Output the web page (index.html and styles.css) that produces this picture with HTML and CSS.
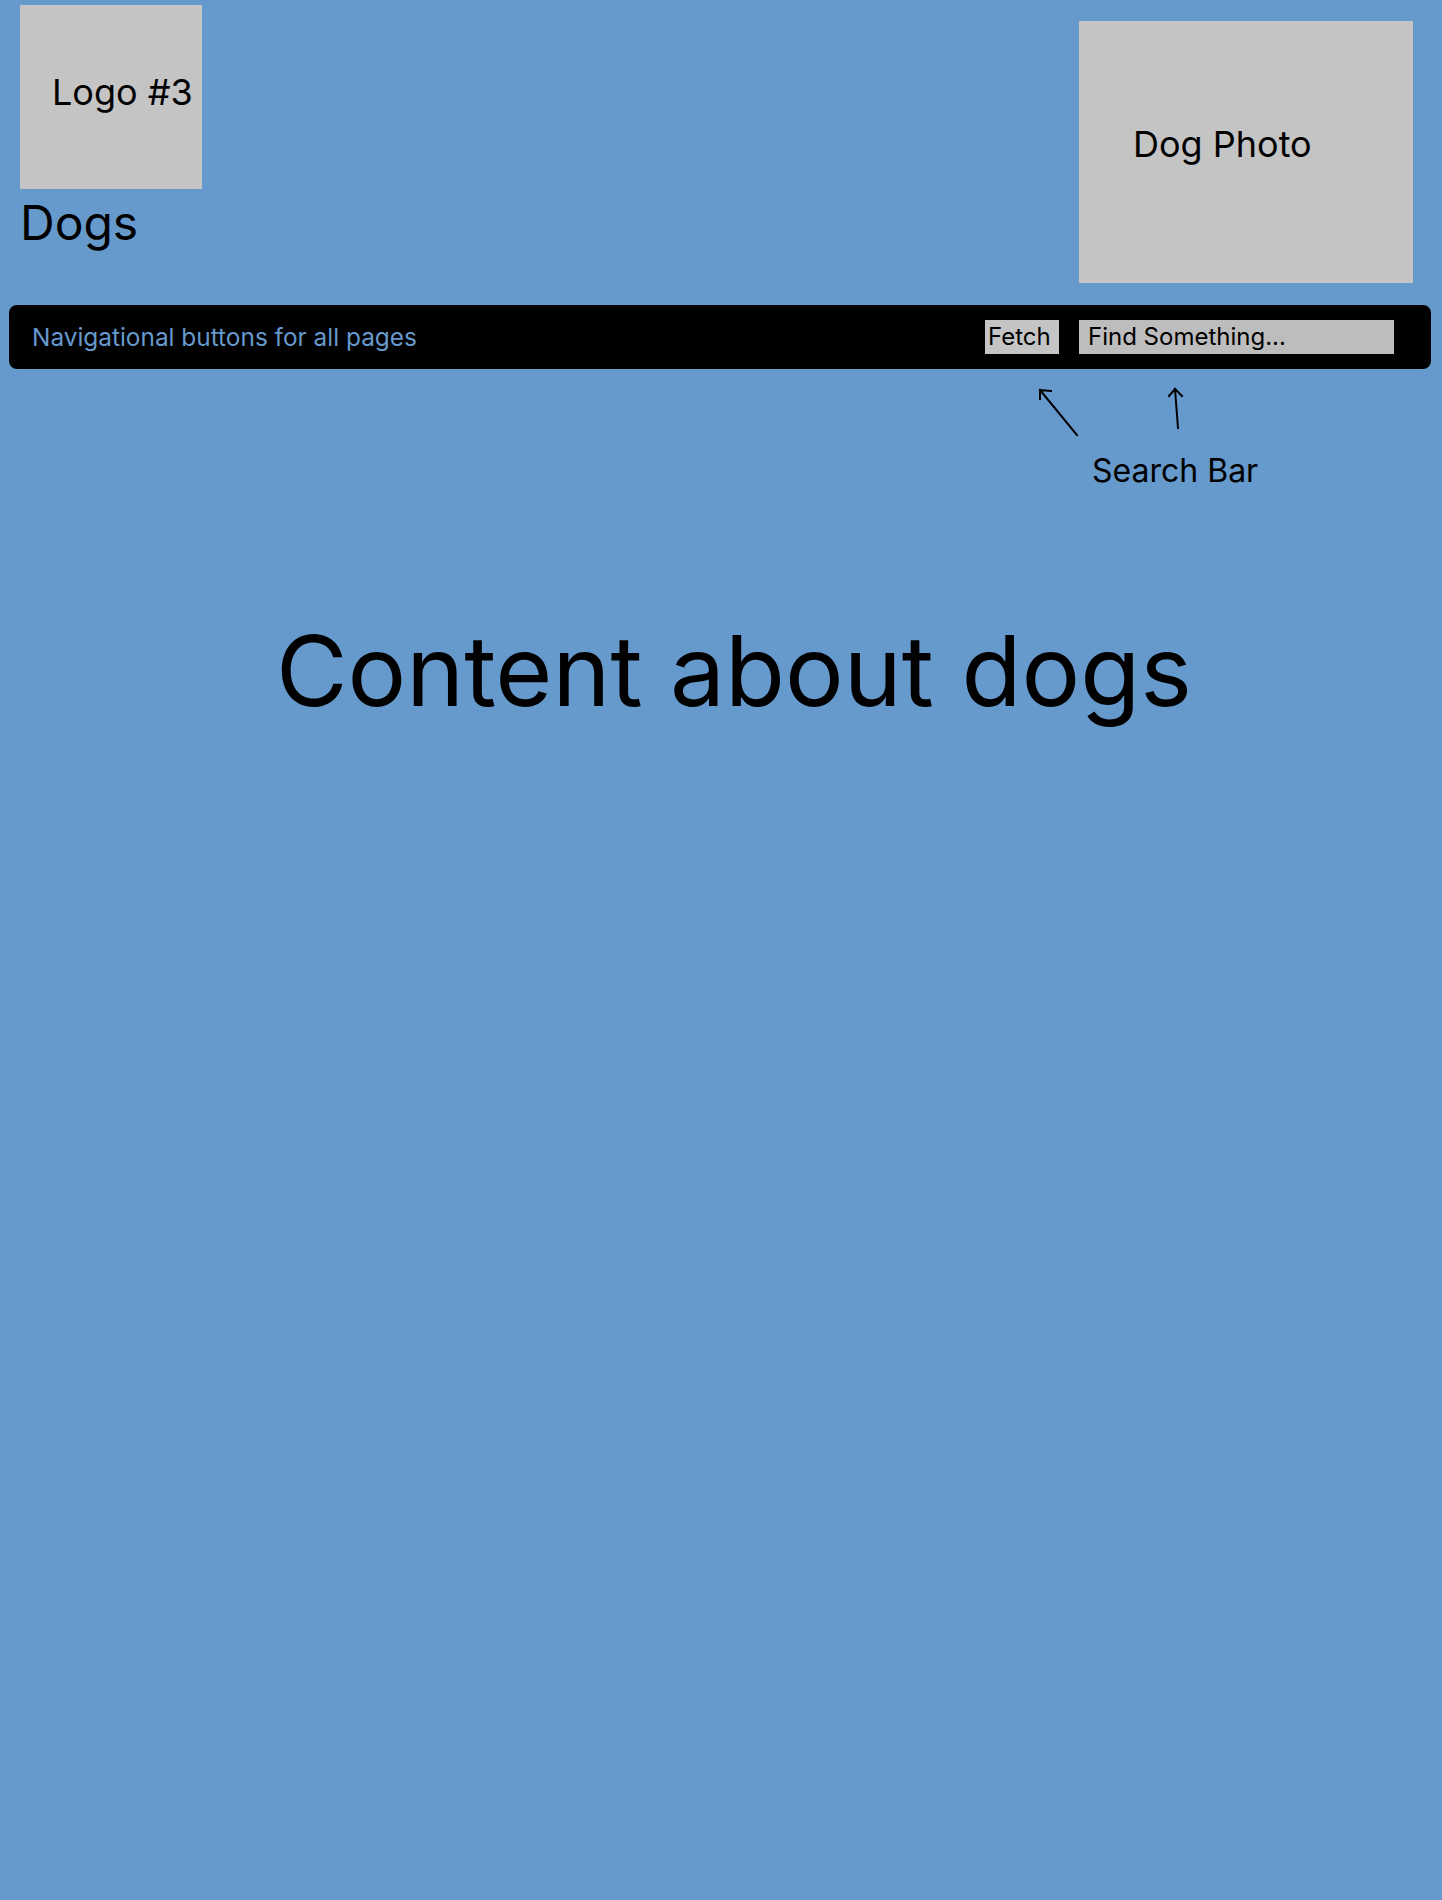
FILE: index.html
```html
<!DOCTYPE html>
<html lang="en">
<head>
<meta charset="utf-8">
<title>Dogs</title>
<link rel="stylesheet" href="styles.css">
</head>
<body>
<header class="header">
  <div class="brand">
    <div class="logo"><span>Logo #3</span></div>
    <h1 class="title">Dogs</h1>
  </div>
  <div class="photo"><span>Dog Photo</span></div>
</header>
<nav class="navbar">
  <span class="nav-text">Navigational buttons for all pages</span>
  <div class="search">
    <button class="fetch">Fetch</button>
    <div class="search-input">Find Something...</div>
  </div>
</nav>
<div class="annotation">
  <svg class="arrows" width="160" height="55" viewBox="0 0 160 55" fill="none" stroke="#000" stroke-width="2" stroke-linecap="square">
    <path d="M47 50 L10 5 M10 5 L21 6 M10 5 L10 14"/>
    <path d="M148 43 L145 4 M145 4 L139 11 M145 4 L152 11"/>
  </svg>
  <div class="annotation-text">Search Bar</div>
</div>
<main class="content">
  <h2 class="content-title">Content about dogs</h2>
</main>
</body>
</html>
```
FILE: styles.css
```css
html, body {
  margin: 0;
  padding: 0;
}
body {
  background: #6699cc;
  font-family: Inter, "Noto Sans", sans-serif;
  color: #000;
  min-height: 1900px;
}
.header {
  display: flex;
  justify-content: space-between;
  align-items: flex-start;
}
.brand {
  margin-left: 20px;
  padding-top: 5px;
}
.logo {
  width: 182px;
  height: 184px;
  background: #c4c4c4;
  box-sizing: border-box;
  padding: 65px 0 0 32px;
  font-size: 36px;
  white-space: nowrap;
}
.title {
  margin: 4px 0 0;
  font-size: 48px;
  font-weight: 400;
  line-height: normal;
}
.photo {
  width: 334px;
  height: 262px;
  margin: 21px 29px 0 0;
  background: #c4c4c4;
  box-sizing: border-box;
  padding: 101px 0 0 54px;
  font-size: 36px;
  white-space: nowrap;
}
.navbar {
  margin: 22px 11px 0 9px;
  height: 64px;
  background: #000;
  border-radius: 8px;
  display: flex;
  align-items: center;
  justify-content: space-between;
  padding: 0 37px 0 23px;
}
.nav-text {
  color: #6699cc;
  font-size: 24.4px;
  margin-top: -1px;
}
.search {
  display: flex;
  gap: 20px;
  align-items: center;
}
.fetch {
  width: 74px;
  height: 34px;
  border: none;
  border-radius: 0;
  background: #c4c4c4;
  font-family: inherit;
  font-size: 24px;
  color: #000;
  padding: 0 0 0 3px;
  text-align: left;
  line-height: 34px;
}
.search-input {
  width: 315px;
  height: 34px;
  background: #bdbdbd;
  box-sizing: border-box;
  padding-left: 9px;
  font-size: 24px;
  line-height: 34px;
}
.annotation {
  margin-top: 16px;
}
.arrows {
  display: block;
  margin-left: 1030px;
}
.annotation-text {
  margin: 11px 0 0 1092px;
  font-size: 32px;
}
.content {
  padding-left: 276px;
}
.content-title {
  margin: 121px 0 0;
  font-size: 98px;
  font-weight: 400;
  line-height: normal;
  white-space: nowrap;
}
```
